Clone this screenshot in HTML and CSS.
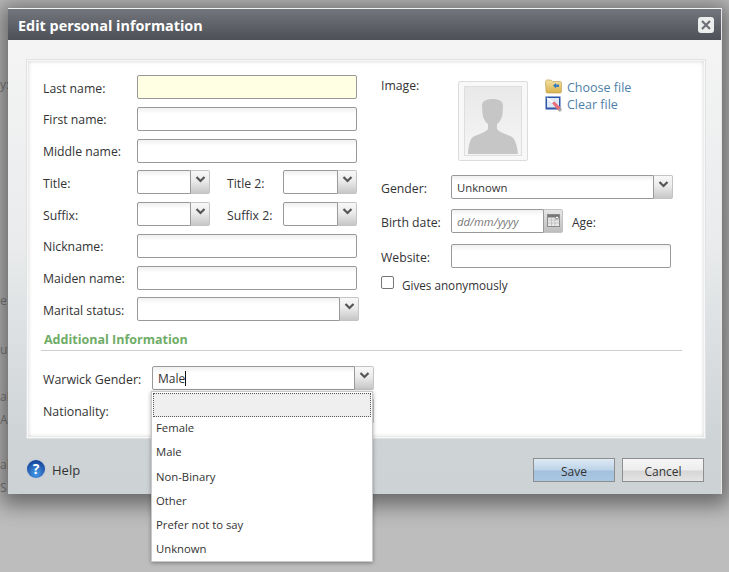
FILE: index.html
```html
<!DOCTYPE html>
<html lang="en">
<head>
<meta charset="utf-8">
<title>Edit personal information</title>
<link rel="stylesheet" href="styles.css">
</head>
<body>
<div class="backdrop">
  <span class="bg-text bt1">y:</span>
  <span class="bg-text bt2">e</span>
  <span class="bg-text bt3">ut</span>
  <span class="bg-text bt4">al</span>
  <span class="bg-text bt5">A</span>
  <span class="bg-text bt6">al</span>
  <span class="bg-text bt7">S</span>
</div>

<section class="dialog">
  <header class="dialog-head">
    <h1>Edit personal information</h1>
    <button class="close" aria-label="Close">
      <svg width="10" height="10" viewBox="0 0 10 10"><path d="M1 1l8 8M9 1l-8 8" stroke="#6d7075" stroke-width="2.2" fill="none"/></svg>
    </button>
  </header>

  <div class="dialog-body">
    <div class="panel">
      <div class="columns">
        <div class="col-left">
          <div class="row"><label class="lbl">Last name:</label><input class="field wide required"></div>
          <div class="row"><label class="lbl">First name:</label><input class="field wide"></div>
          <div class="row"><label class="lbl">Middle name:</label><input class="field wide"></div>
          <div class="row">
            <label class="lbl">Title:</label>
            <div class="combo small"><span class="combo-text"></span><span class="arrow"><svg width="11" height="7" viewBox="0 0 11 7"><path d="M1.5 1l4 4 4-4" stroke="#555" stroke-width="2.2" fill="none"/></svg></span></div>
            <label class="lbl2">Title 2:</label>
            <div class="combo small2"><span class="combo-text"></span><span class="arrow"><svg width="11" height="7" viewBox="0 0 11 7"><path d="M1.5 1l4 4 4-4" stroke="#555" stroke-width="2.2" fill="none"/></svg></span></div>
          </div>
          <div class="row">
            <label class="lbl">Suffix:</label>
            <div class="combo small"><span class="combo-text"></span><span class="arrow"><svg width="11" height="7" viewBox="0 0 11 7"><path d="M1.5 1l4 4 4-4" stroke="#555" stroke-width="2.2" fill="none"/></svg></span></div>
            <label class="lbl2">Suffix 2:</label>
            <div class="combo small2"><span class="combo-text"></span><span class="arrow"><svg width="11" height="7" viewBox="0 0 11 7"><path d="M1.5 1l4 4 4-4" stroke="#555" stroke-width="2.2" fill="none"/></svg></span></div>
          </div>
          <div class="row"><label class="lbl">Nickname:</label><input class="field wide"></div>
          <div class="row"><label class="lbl">Maiden name:</label><input class="field wide"></div>
          <div class="row">
            <label class="lbl">Marital status:</label>
            <div class="combo marital"><span class="combo-text"></span><span class="arrow"><svg width="11" height="7" viewBox="0 0 11 7"><path d="M1.5 1l4 4 4-4" stroke="#555" stroke-width="2.2" fill="none"/></svg></span></div>
          </div>
        </div>

        <div class="col-right">
          <div class="image-row">
            <label class="lbl-image">Image:</label>
            <div class="photo">
              <svg width="58" height="70" viewBox="-1 -1 58 70">
                <defs><linearGradient id="ph" x1="0" y1="0" x2="0" y2="1"><stop offset="0" stop-color="#e9e9e9"/><stop offset="1" stop-color="#f5f5f5"/></linearGradient></defs>
                <rect x="-.5" y="-.5" width="57" height="69" fill="url(#ph)" stroke="#dedede"/>
                <path d="M3 67C3.500 58 5 52 8 50C12 47.500 20 46 23 42L23 37C20 35 18 31 17.500 27L17 19C17 14 21 12 27.500 12C34 12 38 14 38 19L37.500 27C37 31 35 35 32 37L32 42C35 46 43 47.500 47 50C50 52 52 58 53 67Z" fill="#c6c6c6"/>
              </svg>
            </div>
            <div class="file-links">
              <a class="file-link">
                <svg width="17" height="15" viewBox="0 0 17 15">
                  <defs><linearGradient id="fo" x1="0" y1="0" x2="0" y2="1"><stop offset="0" stop-color="#f3e2a0"/><stop offset="1" stop-color="#d9b24e"/></linearGradient></defs>
                  <path d="M.5 3c0-1 .6-2 1.500-2h4l1.500 1.500h7.500c1 0 1.500.7 1.500 1.500v8.500c0 .8-.6 1.500-1.500 1.500h-12.500c-1 0-1.500-.7-1.500-1.500z" fill="url(#fo)" stroke="#b9994a" stroke-width=".6"/>
                  <path d="M8 6.500l3-2.500v1.500h3v2.500h-3v1.500z" fill="#3a7cc2"/>
                </svg>
                <span>Choose file</span>
              </a>
              <a class="file-link">
                <svg width="17" height="17" viewBox="0 0 17 17">
                  <rect x=".5" y=".5" width="15" height="13" fill="#2a55a8"/>
                  <rect x="2" y="2" width="12" height="9.500" fill="#dfe8f5"/>
                  <path d="M2 2l12 9" stroke="#fff" stroke-width="1.500"/>
                  <path d="M7 7l2.500-1.500 6 6-2.500 3z" fill="#e9707a"/>
                  <path d="M13 14.500l2.500-3 1.500 2-2 2.500z" fill="#aaa"/>
                </svg>
                <span>Clear file</span>
              </a>
            </div>
          </div>
          <div class="row-r gender-row">
            <label class="lbl-r">Gender:</label>
            <div class="combo gender"><span class="combo-text">Unknown</span><span class="arrow"><svg width="11" height="7" viewBox="0 0 11 7"><path d="M1.5 1l4 4 4-4" stroke="#555" stroke-width="2.2" fill="none"/></svg></span></div>
          </div>
          <div class="row-r birth-row">
            <label class="lbl-r">Birth date:</label>
            <div class="combo birth"><span class="combo-text hint">dd/mm/yyyy</span><span class="arrow">
              <svg width="13" height="13" viewBox="0 0 13 13"><rect x=".5" y=".5" width="12" height="12" fill="#e9e9e9" stroke="#8b8b8b"/><rect x="1" y="1" width="11" height="2.500" fill="#777"/><path d="M1 6h11M1 9h11M4.500 3v9M8 3v9" stroke="#bbb" stroke-width=".8"/><circle cx="10" cy="3.500" r="1.500" fill="#fff" stroke="#555" stroke-width=".7"/></svg>
            </span></div>
            <span class="age">Age:</span>
          </div>
          <div class="row-r website-row">
            <label class="lbl-r">Website:</label>
            <input class="field site">
          </div>
          <label class="check-row"><input type="checkbox" class="check"><span>Gives anonymously</span></label>
        </div>
      </div>

      <h2 class="section">Additional Information</h2>
      <div class="extra">
        <div class="row-x">
          <label class="lbl-x">Warwick Gender:</label>
          <div class="combo warwick"><span class="combo-text typed">Male<i class="caret"></i></span><span class="arrow"><svg width="11" height="7" viewBox="0 0 11 7"><path d="M1.5 1l4 4 4-4" stroke="#555" stroke-width="2.2" fill="none"/></svg></span></div>
        </div>
        <div class="row-x nat-row">
          <label class="lbl-x nat-label">Nationality:</label>
          <div class="combo warwick nat"><span class="combo-text"></span></div>
        </div>
      </div>
    </div>

    <footer class="dialog-foot">
      <a class="help">
        <svg width="22" height="22" viewBox="0 0 22 22">
          <defs><radialGradient id="hg" cx=".5" cy=".75" r=".75"><stop offset="0" stop-color="#4a9be8"/><stop offset="1" stop-color="#0f3f96"/></radialGradient></defs>
          <circle cx="11" cy="11" r="10.500" fill="#c9ced6"/>
          <circle cx="11" cy="11" r="9" fill="url(#hg)"/>
          <text x="11" y="16" text-anchor="middle" class="help-q">?</text>
        </svg>
        <span class="help-text">Help</span>
      </a>
      <div class="actions">
        <button class="btn primary">Save</button>
        <button class="btn">Cancel</button>
      </div>
    </footer>
  </div>
</section>

<ul class="dropdown">
  <li class="active"></li>
  <li>Female</li>
  <li>Male</li>
  <li>Non-Binary</li>
  <li>Other</li>
  <li>Prefer not to say</li>
  <li>Unknown</li>
</ul>
</body>
</html>
```
FILE: styles.css
```css
* { box-sizing: border-box; }
html, body { margin: 0; height: 100%; }
body {
  width: 729px; height: 572px; overflow: hidden; position: relative;
  background: #bdbdbd;
  font-family: "Open Sans", "Noto Sans", sans-serif;
  font-size: 12px; color: #333;
}
.backdrop { position: absolute; inset: 0; }
.bg-text { position: absolute; left: 0; color: #7f7f7f; font-size: 12px; line-height: 14px; }
.bt1 { top: 78px; }
.bt2 { top: 294px; }
.bt3 { top: 343px; }
.bt4 { top: 390px; }
.bt5 { top: 413px; }
.bt6 { top: 458px; }
.bt7 { top: 481px; }

.dialog {
  position: absolute; left: 8px; top: 8px; width: 714px; height: 486px;
  border-top: 1px solid #f4f4f4; border-right: 1px solid #e6e6e6;
  box-shadow: 0 4px 20px 7px rgba(0,0,0,.45);
  display: flex; flex-direction: column;
}
.dialog-head {
  height: 31px; flex: none; display: flex; align-items: center; justify-content: space-between;
  padding: 0 7px 0 10px;
  background: linear-gradient(#72767c, #4d5057);
}
.dialog-head h1 { margin: 2px 0 0; font-size: 14.400px; font-weight: 700; color: #fff; }
.close {
  width: 16px; height: 16px; padding: 0; border: 0; border-radius: 3px; background: #eceded;
  display: flex; align-items: center; justify-content: center;
}
.dialog-body {
  flex: 1; display: flex; flex-direction: column; padding: 20px 16px 0 19px;
  background: linear-gradient(#f4f4f4 0, #e9ebec 45%, #ced3d6 88%, #cdd2d5 100%);
}
.panel {
  position: relative; height: 378px; padding: 14px 15px 0 15px;
  background: #fff; border: 1px solid #f8f8f8;
  box-shadow: 0 0 0 1px #dfe1e2, inset 0 0 4px #cfcfcf;
}
.columns { display: flex; }
.col-left { width: 338px; display: flex; flex-direction: column; gap: 7.75px; }
.row { display: flex; align-items: center; height: 24px; }
.lbl { width: 94px; flex: none; padding-top: 2px; font-size: 12.250px; }
.lbl2 { width: 56px; flex: none; margin-left: 17px; padding-top: 2px; font-size: 12.250px; }
.field {
  height: 24px; border: 1px solid #999; border-radius: 2px; padding: 0 5px;
  background: linear-gradient(#f0f0f0, #fff 6px);
  font: inherit; outline: 0;
}
.wide { width: 220px; }
.required { background: #ffffe3; }
.site { width: 220px; }

.combo { display: flex; height: 24px; flex: none; }
.combo-text {
  flex: 1; min-width: 0; height: 24px; line-height: 24px; padding-left: 5px;
  border: 1px solid #999; border-radius: 2px 0 0 2px;
  background: linear-gradient(#f0f0f0, #fff 6px);
  font-size: 11.300px;
}
.arrow {
  width: 19px; flex: none; display: flex; align-items: flex-start; justify-content: center; padding-top: 5px;
  border: 1px solid #c4c4c4; border-left: 0; border-radius: 0 2px 2px 0;
  background: linear-gradient(#f8f8f8, #ebebeb 45%, #c6c6c6);
}
.small { width: 73px; }
.small2 { width: 74px; }
.marital { width: 222px; }

.col-right { width: 300px; }
.image-row { display: flex; height: 86px; }
.lbl-image { width: 77px; flex: none; margin-top: 2px; font-size: 12.250px; }
.photo {
  width: 70px; height: 80px; margin-top: 6px; flex: none;
  border: 1px solid #dcdcdc; border-radius: 2px; background: #f8f8f8;
  display: flex; align-items: center; justify-content: center;
}
.photo svg { display: block; }
.file-links { margin-left: 17px; margin-top: 4px; display: flex; flex-direction: column; }
.file-link { display: flex; align-items: flex-start; gap: 5px; height: 17px; color: #4d7fa8; line-height: 18px; font-size: 12.500px; }
.row-r { display: flex; align-items: center; height: 24px; }
.gender-row { margin-top: 14px; }
.birth-row { margin-top: 10px; }
.website-row { margin-top: 11px; }
.lbl-r { width: 70px; flex: none; padding-top: 2px; font-size: 12.250px; }
.gender { width: 222px; }
.birth { width: 112px; }
.hint { font-style: italic; color: #777; }
.birth .arrow { padding-top: 4px; background: linear-gradient(#e6e6e6, #bdbdbd); }
.age { margin-left: 9px; padding-top: 2px; }
.check-row { display: flex; align-items: center; margin-top: 7px; height: 20px; font-size: 11.700px; }
.check {
  appearance: none; width: 13px; height: 13px; margin: 0 8px 5px 0; background: #fff;
  border: 1px solid #767676; border-radius: 2px;
}

.section {
  margin: 10px 0 0 -2px; padding: 0 0 0 3px; height: 20px;
  font-size: 12.500px; line-height: 18px; font-weight: 700; color: #6fad67;
  border-bottom: 1px solid #cfcfcf; width: 641px;
}
.extra { margin-top: 15px; }
.row-x { display: flex; align-items: center; height: 24px; }
.nat-row { margin-top: 9px; }
.lbl-x { width: 109px; flex: none; padding-top: 2px; font-size: 12.400px; }
.nat-label { padding-top: 0; }
.warwick { width: 222px; }
.typed { color: #333; font-size: 12px; }
.caret { display: inline-block; width: 1px; height: 15px; vertical-align: -3px; background: #111; }
.nat .combo-text { border-color: #c8c8c8; }

.dialog-foot { flex: 1; display: flex; justify-content: space-between; padding: 20px 1px 0 0; }
.help { display: flex; align-items: center; gap: 5px; height: 24px; margin-top: -1px; font-size: 13px; }
.help svg { display: block; margin-left: -2px; }
.help-text { padding-top: 2px; }
.help-q { font: 700 14px "Open Sans", sans-serif; fill: #fff; }
.actions { display: flex; gap: 7px; }
.btn {
  width: 82px; height: 24px; padding: 3px 0 0; border: 1px solid #8e8e8e;
  background: linear-gradient(#f6f6f6, #ededed 50%, #d6d6d6 55%, #e4e4e4);
  font: inherit; color: #333;
}
.primary {
  background: linear-gradient(#dfeaf5, #bcd3e8 50%, #a3c1de 55%, #aac7e2);
}

.dropdown {
  position: absolute; left: 151px; top: 391px; width: 222px; margin: 0; padding: 1px;
  list-style: none; background: #fff; border: 1px solid #c8c8c8;
  box-shadow: 0 1px 4px rgba(0,0,0,.35);
  height: 171px;
}
.dropdown li { height: 24.200px; line-height: 22px; padding-left: 3px; font-size: 11.300px; }
.dropdown .active { background: #efefef; outline: 1px dotted #555; outline-offset: -1px; }
```
